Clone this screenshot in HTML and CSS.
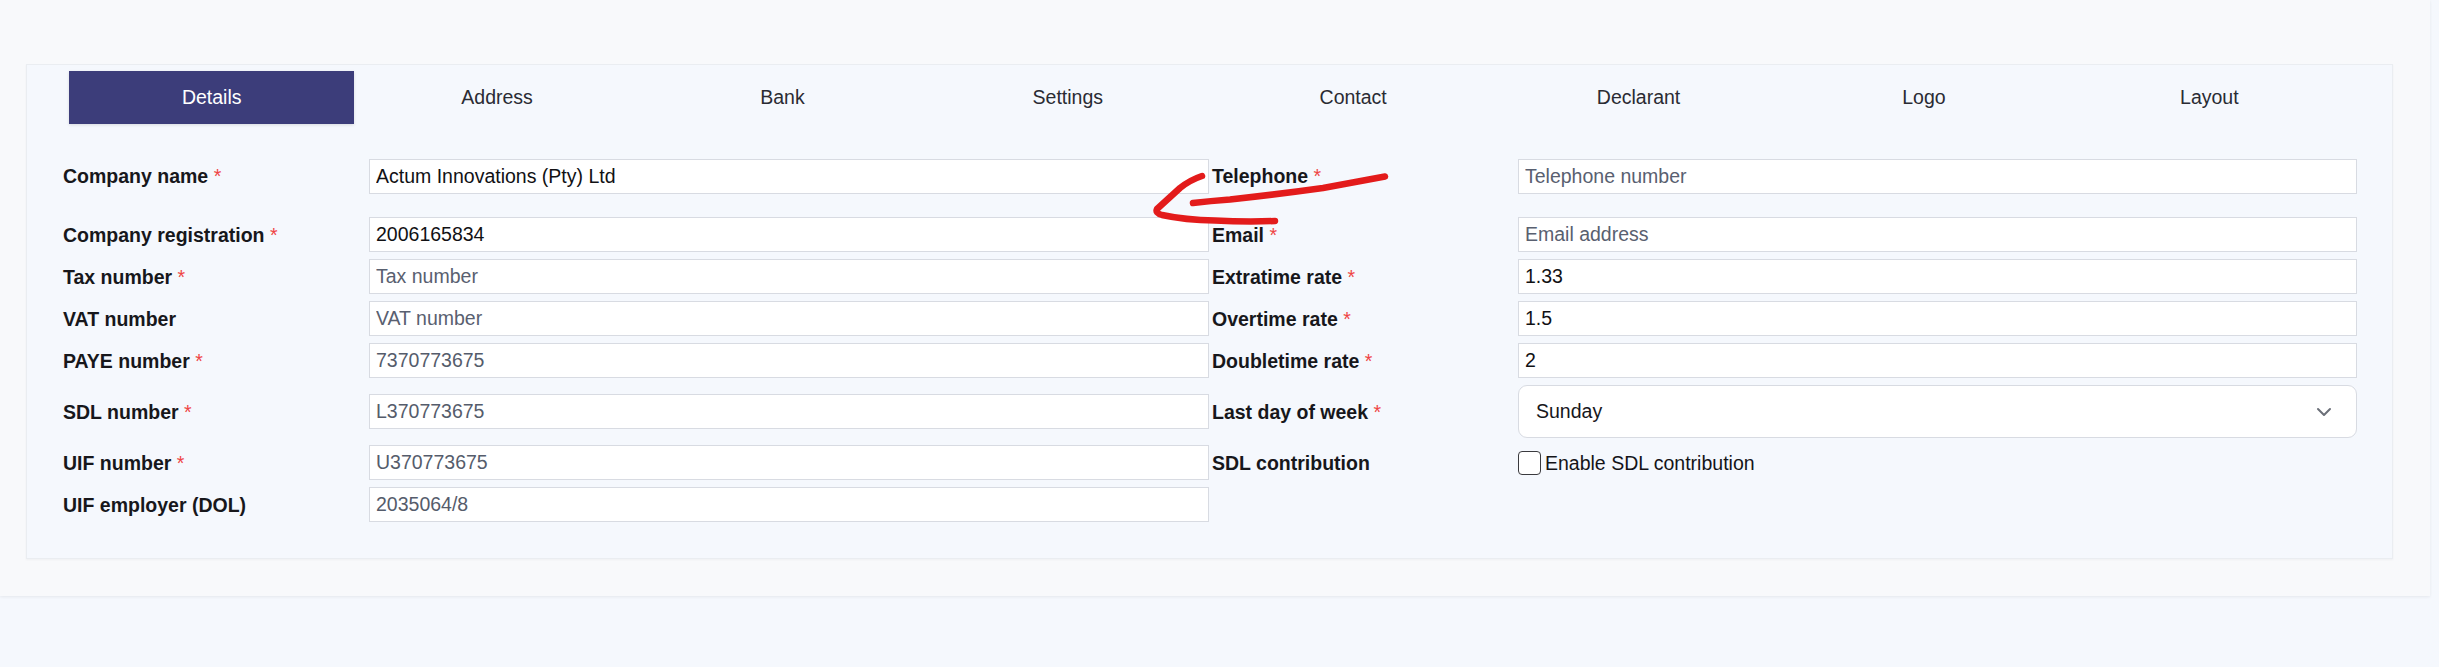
FILE: index.html
```html
<!DOCTYPE html>
<html lang="en">
<head>
<meta charset="utf-8">
<title>Company details</title>
<link rel="stylesheet" href="styles.css">
</head>
<body>
<div class="shell">
  <div class="card">
    <nav class="tabs">
      <div class="tab active">Details</div>
      <div class="tab">Address</div>
      <div class="tab">Bank</div>
      <div class="tab">Settings</div>
      <div class="tab">Contact</div>
      <div class="tab">Declarant</div>
      <div class="tab">Logo</div>
      <div class="tab">Layout</div>
    </nav>
    <form class="form">
      <div class="row first">
        <label class="lbl">Company name <span class="req">*</span></label>
        <input class="inp" type="text" value="Actum Innovations (Pty) Ltd">
        <label class="lbl right">Telephone <span class="req">*</span></label>
        <input class="inp" type="text" placeholder="Telephone number">
      </div>
      <div class="row">
        <label class="lbl">Company registration <span class="req">*</span></label>
        <input class="inp" type="text" value="2006165834">
        <label class="lbl right">Email <span class="req">*</span></label>
        <input class="inp" type="text" placeholder="Email address">
      </div>
      <div class="row">
        <label class="lbl">Tax number <span class="req">*</span></label>
        <input class="inp" type="text" placeholder="Tax number">
        <label class="lbl right">Extratime rate <span class="req">*</span></label>
        <input class="inp" type="text" value="1.33">
      </div>
      <div class="row">
        <label class="lbl">VAT number</label>
        <input class="inp" type="text" placeholder="VAT number">
        <label class="lbl right">Overtime rate <span class="req">*</span></label>
        <input class="inp" type="text" value="1.5">
      </div>
      <div class="row">
        <label class="lbl">PAYE number <span class="req">*</span></label>
        <input class="inp ro" type="text" value="7370773675" readonly>
        <label class="lbl right">Doubletime rate <span class="req">*</span></label>
        <input class="inp" type="text" value="2">
      </div>
      <div class="row">
        <label class="lbl">SDL number <span class="req">*</span></label>
        <input class="inp ro" type="text" value="L370773675" readonly>
        <label class="lbl right">Last day of week <span class="req">*</span></label>
        <div class="select">
          <span>Sunday</span>
          <svg class="chev" width="16" height="10" viewBox="0 0 16 10"><path d="M2 2 L8 8 L14 2" fill="none" stroke="#6b6f78" stroke-width="2" stroke-linecap="round" stroke-linejoin="round"/></svg>
        </div>
      </div>
      <div class="row">
        <label class="lbl">UIF number <span class="req">*</span></label>
        <input class="inp ro" type="text" value="U370773675" readonly>
        <label class="lbl right">SDL contribution</label>
        <label class="check"><span class="box"></span>Enable SDL contribution</label>
      </div>
      <div class="row">
        <label class="lbl">UIF employer (DOL)</label>
        <input class="inp ro" type="text" value="2035064/8" readonly>
      </div>
    </form>
  </div>
</div>
<svg class="scribble" width="260" height="70" viewBox="0 0 260 70">
  <path d="M62 16 Q50 20 40 28 Q28 39 17 49 Q15 53 22 55 Q45 60 75 60.5 Q105 62 135 61" fill="none" stroke="#e31b1b" stroke-width="6.5" stroke-linecap="round" stroke-linejoin="round"/>
  <path d="M53 43 Q70 41 90 39.5 Q140 34 183 28 Q215 22 245 16.5" fill="none" stroke="#e31b1b" stroke-width="6.5" stroke-linecap="round" stroke-linejoin="round"/>
</svg>
</body>
</html>
```
FILE: styles.css
```css
html, body {
  margin: 0;
  padding: 0;
}
body {
  background: #f5f8fd;
  font-family: "Liberation Sans", Arial, sans-serif;
  font-size: 19.5px;
  color: #1b1b1f;
  position: relative;
  min-height: 667px;
}
.shell {
  margin-right: 9px;
  background: #f8f9fb;
  padding: 64px 37px 37px 26px;
  box-shadow: 0 1px 3px rgba(0, 0, 0, 0.07);
}
.card {
  background: #f5f8fd;
  border: 1px solid #eaedf1;
  box-shadow: 0 1px 2px rgba(0, 0, 0, 0.04);
  padding: 6px 0 36px 0;
}
.tabs {
  display: flex;
  margin: 0 40px 0 42px;
  height: 53px;
}
.tab {
  flex: 1;
  display: flex;
  align-items: center;
  justify-content: center;
  color: #2a2b33;
}
.tab.active {
  background: #3c3d7a;
  color: #ffffff;
  box-shadow: 0 1px 3px rgba(0, 0, 0, 0.12);
}
.form {
  margin: 35px 35px 0 36px;
  display: flex;
  flex-direction: column;
  gap: 7px;
}
.row {
  display: grid;
  grid-template-columns: 306px 840px 309px 1fr;
  align-items: center;
}
.row.first {
  margin-bottom: 16px;
}
.row.first > * {
  align-self: start;
}
.row.first .lbl {
  margin-top: 6px;
}
.lbl {
  font-weight: bold;
  line-height: 22px;
  color: #17171b;
}
.lbl.right {
  padding-left: 3px;
}
.req {
  color: #ef4444;
  font-weight: normal;
}
.inp {
  box-sizing: border-box;
  height: 35px;
  width: 100%;
  border: 1px solid #d8dbe2;
  background: #ffffff;
  padding: 0 6px;
  font-family: "Liberation Sans", Arial, sans-serif;
  font-size: 19.5px;
  color: #111114;
  outline: none;
  margin: 0;
}
.inp::placeholder {
  color: #596070;
}
.inp.ro {
  color: #555c6b;
}
.select {
  box-sizing: border-box;
  height: 53px;
  border: 1px solid #d8dbe2;
  border-radius: 9px;
  background: #ffffff;
  display: flex;
  align-items: center;
  justify-content: space-between;
  padding: 0 24px 0 17px;
  color: #17171b;
}
.chev {
  display: block;
}
.check {
  display: flex;
  align-items: center;
  gap: 4px;
  color: #141418;
  line-height: 24px;
}
.box {
  box-sizing: border-box;
  width: 23px;
  height: 24px;
  border: 1.5px solid #3a3a3e;
  border-radius: 4px;
  background: #ffffff;
}
.scribble {
  position: absolute;
  left: 1140px;
  top: 160px;
}
```
